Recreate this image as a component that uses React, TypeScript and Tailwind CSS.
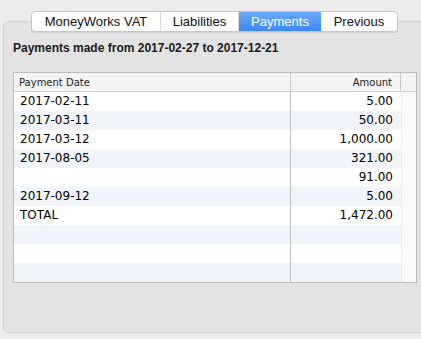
const rows: [string, string][] = [
  ['2017-02-11', '5.00'],
  ['2017-03-11', '50.00'],
  ['2017-03-12', '1,000.00'],
  ['2017-08-05', '321.00'],
  ['', '91.00'],
  ['2017-09-12', '5.00'],
  ['TOTAL', '1,472.00'],
  ['', ''],
  ['', ''],
  ['', ''],
];

const tabs = [
  { label: 'MoneyWorks VAT', w: 'w-[129px] border-r border-[#d8d8d8]' },
  { label: 'Liabilities', w: 'w-[78px] border-r border-[#d8d8d8]' },
  { label: 'Payments', w: 'w-[82px]', active: true },
  { label: 'Previous', w: 'w-[76px]' },
];

const App = () => {
  return (
    <div className="min-h-screen w-[421px] h-[339px] overflow-hidden bg-[#ececec] pt-[21px] pl-[3px] font-['Liberation_Sans',sans-serif]">
      {/* Tab panel */}
      <div className="h-[312px] w-[430px] rounded-[5px] border border-[#d2d2d2] bg-[#e3e3e3]">
        {/* Segmented tabs */}
        <div className="-mt-[11px] ml-[27px] flex h-[21px] w-[367px] overflow-hidden rounded-[4px] border border-[#c6c6c6] bg-white shadow-[0_1px_1px_rgba(0,0,0,0.1)]">
          {tabs.map((t) => (
            <div
              key={t.label}
              className={`${t.w} flex items-center justify-center text-[13px] leading-none ${
                t.active ? 'bg-linear-to-b from-[#6aa9fe] to-[#3c86f8] text-white' : 'text-[#111]'
              }`}
            >
              {t.label}
            </div>
          ))}
        </div>

        {/* Heading */}
        <div className="mt-[9px] ml-[9px] h-[14px] text-[12px] leading-[14px] font-bold text-[#1a1a1a]">
          Payments made from 2017-02-27 to 2017-12-21
        </div>

        {/* Table */}
        <div className="mt-[17px] ml-[9px] w-[404px] border border-[#bcbcbc] bg-white font-['DejaVu_Sans',sans-serif]">
          <div className="flex h-[19px] border-b border-[#cfcfcf] bg-[#f3f3f3] text-[10px] text-[#222]">
            <div className="flex w-[277px] items-center border-r border-[#c8c8c8] pl-[5px]">Payment Date</div>
            <div className="flex w-[110px] items-center justify-end border-r border-[#c8c8c8] pr-[8px]">Amount</div>
            <div className="flex-1" />
          </div>
          <div className="flex h-[190px] overflow-hidden">
            <div className="w-[387px]">
              {rows.map(([date, amt], i) => (
                <div key={i} className={`flex h-[19px] text-[12px] leading-[19px] text-black ${i % 2 ? 'bg-[#f1f4f9]' : 'bg-white'}`}>
                  <div className="w-[277px] border-r border-[#c0c0c0] pl-[6px]">{date}</div>
                  <div className="w-[110px] pr-[8px] text-right">{amt}</div>
                </div>
              ))}
            </div>
            <div className="flex-1 border-l border-[#ebebeb] bg-[#f9f9f9]" />
          </div>
        </div>
      </div>
    </div>
  );
};

export default App;
